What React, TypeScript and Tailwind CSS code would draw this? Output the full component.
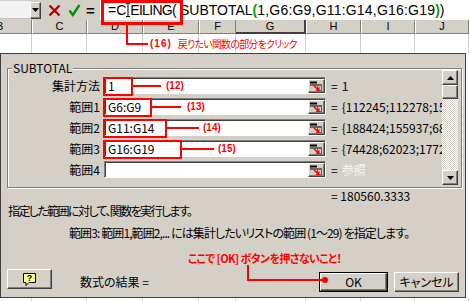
import React from 'react';

const cjk = "font-['Noto_Sans_CJK_JP','Noto_Sans_CJK_SC',sans-serif]";
const latin = "font-['Liberation_Sans',Arial,sans-serif]";
const raised =
  'border border-t-white border-l-white border-r-[#404040] border-b-[#404040] shadow-[inset_-1px_-1px_0_#808080]';
const sunken =
  'border border-t-[#808080] border-l-[#808080] border-r-white border-b-white shadow-[inset_1px_1px_0_#404040]';

const cols = [
  { l: 'B', w: 32 },
  { l: 'C', w: 55 },
  { l: 'D', w: 56 },
  { l: 'E', w: 56 },
  { l: 'F', w: 37 },
  { l: 'G', w: 70 },
  { l: 'H', w: 55 },
  { l: 'I', w: 54 },
  { l: 'J', w: 54 },
];

const args = [
  { label: '集計方法', value: '1', ref: '= 1' },
  { label: '範囲1', value: 'G6:G9', ref: '= {112245;112278;153097;114523}' },
  { label: '範囲2', value: 'G11:G14', ref: '= {188424;155937;68517;40221}' },
  { label: '範囲3', value: 'G16:G19', ref: '= {74428;62023;177215;90112}' },
  { label: '範囲4', value: '', ref: '' },
];

function RefButton() {
  return (
    <div className={`w-[17px] h-[14px] bg-[#d4d0c8] flex items-center justify-center ${raised}`}>
      <svg width="13" height="10" viewBox="0 0 13 10">
        <rect x="0" y="0.5" width="7" height="2" fill="#000" />
        <rect x="0" y="3.5" width="12" height="1" fill="#000" />
        <path d="M7.5 4.5 V9.5 M11.5 4.5 V9.5 M7.5 9.5 H12" stroke="#606060" strokeWidth="1" fill="none" />
        <path d="M4 5 L8.5 9" stroke="#ff0000" strokeWidth="1.6" />
        <path d="M9.5 5.5 V10 H5.5 Z" fill="#ff0000" />
      </svg>
    </div>
  );
}

function FormulaBar() {
  return (
    <div className="h-[20px] flex items-center bg-[#d4d0c8]">
      <div className="w-[30px] h-[18px] bg-[#f2f2f2] border-b border-[#c0c0c0]" />
      <div className={`w-[11px] h-[17px] bg-[#d4d0c8] flex items-center justify-center ${raised}`}>
        <svg width="7" height="4" viewBox="0 0 7 4">
          <path d="M0 0 H7 L3.5 4 Z" fill="#000" />
        </svg>
      </div>
      <div className="w-[20px] flex justify-end">
        <svg width="13" height="13" viewBox="0 0 13 13">
          <path d="M1.5 1.5 L11.5 11.5 M11.5 1.5 L1.5 11.5" stroke="#c00000" strokeWidth="2.4" />
        </svg>
      </div>
      <div className="w-[20px] flex justify-end">
        <svg width="13" height="13" viewBox="0 0 13 13">
          <path d="M1.5 6.5 L4.8 11 L11.5 1" stroke="#009000" strokeWidth="2.4" fill="none" />
        </svg>
      </div>
      <div className={`w-[19px] text-center text-[15px] font-bold leading-none ${latin}`}>=</div>
      <div
        className={`flex-1 h-[20px] bg-white flex items-center pl-[8px] text-[14px] whitespace-nowrap overflow-hidden ${latin}`}
      >
        <span>=C</span>
        <svg width="4" height="14" viewBox="0 0 4 14">
          <path d="M0 0.5 H4 M2 0.5 V13.5 M0 13.5 H4" stroke="#000" strokeWidth="1" />
        </svg>
        <span className="tracking-[-0.7px]">EILING(</span>
        <span className="ml-[4px]">SUBTOTAL</span>
        <span className="text-[#00a000] font-bold">(</span>
        <span className="tracking-[0.2px]">1,G6:G9,G11:G14,G16:G19</span>
        <span className="text-[#00a000] font-bold">)</span>
        <span>)</span>
      </div>
    </div>
  );
}

function HeaderRow() {
  return (
    <div className={`h-[14px] flex bg-[#d4d0c8] text-[11px] leading-[13px] ${latin}`}>
      {cols.map((c) => (
        <div
          key={c.l}
          style={{ width: c.w }}
          className={
            c.l === 'G'
              ? 'shrink-0 text-center border-r-2 border-b-2 border-[#404040] bg-[#d4d0c8]'
              : c.l === 'B'
                ? 'shrink-0 text-left -indent-[4px] border-r border-b border-[#808080] overflow-hidden'
                : 'shrink-0 text-center border-r border-b border-[#808080] border-l border-l-white'
          }
        >
          {c.l}
        </div>
      ))}
    </div>
  );
}

function CellRow({ h }: { h: string }) {
  return (
    <div className={`flex ${h} bg-white`}>
      {cols.map((c) => (
        <div key={c.l} style={{ width: c.w }} className="shrink-0 border-r border-[#d0d0d0]" />
      ))}
    </div>
  );
}

function Scrollbar() {
  return (
    <div className="w-[16px] h-[115px] mt-[1px] mr-[3px] flex flex-col shrink-0">
      <div className={`h-[15px] bg-[#d4d0c8] flex items-center justify-center ${raised}`}>
        <svg width="7" height="4" viewBox="0 0 7 4">
          <path d="M0 4 H7 L3.5 0 Z" fill="#000" />
        </svg>
      </div>
      <div className={`h-[14px] bg-[#d4d0c8] ${raised}`} />
      <div className="flex-1 bg-[repeating-conic-gradient(#d4d0c8_0_25%,#ffffff_0_50%)] bg-[length:2px_2px]" />
      <div className={`h-[15px] bg-[#d4d0c8] flex items-center justify-center ${raised}`}>
        <svg width="7" height="4" viewBox="0 0 7 4">
          <path d="M0 0 H7 L3.5 4 Z" fill="#000" />
        </svg>
      </div>
    </div>
  );
}

function Dialog() {
  return (
    <div className="w-[466px] h-full bg-[#d4d0c8] border border-[#404040] flex flex-col text-[12px] [font-feature-settings:'palt']">
      <div className="relative ml-[6px] mt-[14px] w-[455px] h-[120px] border border-[#808080] shadow-[inset_1px_1px_0_#fff,1px_1px_0_#fff] flex">
        <span className="absolute -top-[8px] left-[4px] px-[1px] bg-[#d4d0c8] leading-[14px]">SUBTOTAL</span>
        <div className="flex-1 min-w-0 overflow-hidden flex flex-col gap-[4px] pt-[8px]">
          {args.map((a) => (
            <div key={a.label} className="flex items-center h-[17px] whitespace-nowrap">
              <div className="w-[96px] shrink-0 pr-[4px] text-right leading-[14px]">{a.label}</div>
              <div className={`w-[222px] h-[17px] shrink-0 bg-white flex items-center justify-between ${sunken}`}>
                <span className="pl-[3px] leading-[14px]">{a.value}</span>
                <RefButton />
              </div>
              <span className="ml-[5px] leading-[14px]">=</span>
              <span
                className={
                  a.ref ? 'ml-[4px] leading-[14px]' : 'ml-[4px] leading-[14px] text-[#f6f6f6]'
                }
              >
                {a.ref ? a.ref.slice(2) : '参照'}
              </span>
            </div>
          ))}
        </div>
        <Scrollbar />
      </div>
      <div className="mt-[1px] h-[14px] pl-[330px] leading-[14px]">= 180560.3333</div>
      <div className="mt-[1px] h-[14px] pl-[7px] leading-[14px] tracking-[-1.6px] whitespace-nowrap">
        指定した範囲に対して、関数を実行します。
      </div>
      <div className="mt-[8px] h-[14px] pl-[68px] leading-[14px] tracking-[-0.9px] whitespace-nowrap">
        範囲3: 範囲1,範囲2,... には集計したいリストの範囲 (1～29) を指定します。
      </div>
      <div className="mt-[11px] h-[14px] pl-[187px] leading-[14px] text-[#ff0000] font-bold text-[11px] tracking-[-0.6px] whitespace-nowrap">
        ここで [OK] ボタンを押さないこと！
      </div>
      <div className="mt-[4px] h-[23px] flex">
        <div className={`ml-[6px] w-[45px] h-[20px] bg-[#d4d0c8] flex items-center justify-center ${raised}`}>
          <svg width="15" height="15" viewBox="0 0 15 15">
            <path d="M1.5 1.5 H13.5 V10.5 H7 L4 13.5 V10.5 H1.5 Z" fill="#ffff90" stroke="#000" strokeWidth="1" />
            <text x="7.5" y="9" textAnchor="middle" fontSize="9" fontWeight="bold" fontFamily="Liberation Sans, sans-serif">?</text>
          </svg>
        </div>
        <div className="w-[267px] pl-[28px] pt-[6px] leading-[14px]">数式の結果 =</div>
        <div className="mt-[3px] w-[69px] h-[20px] border border-black">
          <div className={`h-full bg-[#d4d0c8] flex items-center justify-center leading-none ${raised}`}>OK</div>
        </div>
        <div className={`ml-[6px] mt-[3px] w-[65px] h-[20px] bg-[#d4d0c8] flex items-center justify-center leading-none ${raised}`}>
          キャンセル
        </div>
      </div>
    </div>
  );
}

function Annotations() {
  const label = `absolute text-[#ff0000] font-bold text-[10px] leading-[12px] whitespace-nowrap ${latin}`;
  return (
    <>
      <div className="absolute left-[101px] top-0 w-[82px] h-[25px] border-[3px] border-[#ff0000]" />
      <div className="absolute left-[126px] top-[25px] w-[2px] h-[20px] bg-[#ff0000]" />
      <div className="absolute left-[126px] top-[43px] w-[22px] h-[2px] bg-[#ff0000]" />
      <div className={`${label} left-[150px] top-[38px] flex gap-[6px]`}>
        <span className="tracking-[1px]">(16)</span>
        <span className={`${cjk} font-normal tracking-[-0.8px] [font-feature-settings:'palt']`}>
          戻りたい関数の部分をクリック
        </span>
      </div>

      <div className="absolute left-[103px] top-[77px] w-[30px] h-[19px] border-2 border-[#ff0000]" />
      <div className="absolute left-[133px] top-[85px] w-[28px] h-[2px] bg-[#ff0000]" />
      <div className={`${label} left-[166px] top-[80px]`}>(12)</div>

      <div className="absolute left-[103px] top-[98px] w-[49px] h-[19px] border-2 border-[#ff0000]" />
      <div className="absolute left-[152px] top-[106px] w-[29px] h-[2px] bg-[#ff0000]" />
      <div className={`${label} left-[187px] top-[101px]`}>(13)</div>

      <div className="absolute left-[103px] top-[119px] w-[64px] h-[19px] border-2 border-[#ff0000]" />
      <div className="absolute left-[167px] top-[127px] w-[32px] h-[2px] bg-[#ff0000]" />
      <div className={`${label} left-[203px] top-[122px]`}>(14)</div>

      <div className="absolute left-[103px] top-[140px] w-[79px] h-[19px] border-2 border-[#ff0000]" />
      <div className="absolute left-[182px] top-[148px] w-[32px] h-[2px] bg-[#ff0000]" />
      <div className={`${label} left-[218px] top-[143px]`}>(15)</div>

      <div className="absolute left-[247px] top-[265px] w-[2px] h-[16px] bg-[#ff0000]" />
      <div className="absolute left-[247px] top-[279px] w-[78px] h-[2px] bg-[#ff0000]" />
      <div className="absolute left-[322px] top-[277px] w-[6px] h-[6px] rounded-full bg-[#ff0000]" />
    </>
  );
}

export default function App() {
  return (
    <div className={`relative w-[469px] h-[301px] overflow-hidden bg-white text-black ${cjk}`}>
      <FormulaBar />
      <HeaderRow />
      <CellRow h="h-[19px]" />
      <div className="flex h-[245px]">
        <Dialog />
        <div className="flex-1 bg-white" />
      </div>
      <CellRow h="h-[3px]" />
      <Annotations />
    </div>
  );
}
